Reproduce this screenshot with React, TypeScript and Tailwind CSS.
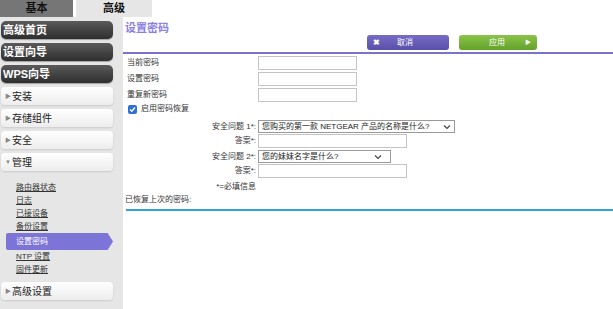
const font = { fontFamily: '"Liberation Sans", "Noto Sans CJK SC", sans-serif' };

const DarkBtn = ({ label }: { label: string }) => (
    <div className='ml-[1px] w-[112px] h-[18px] rounded-[5px] bg-gradient-to-b from-[#5a5a5a] to-[#2f2f2f] text-white text-[11px] font-bold leading-[18px] pl-[2px] shadow-[0_1px_1px_rgba(0,0,0,0.3)]'>
        {label}
    </div>
);

const WhiteBtn = ({ label, open }: { label: string; open?: boolean }) => (
    <div className='ml-[1px] w-[112px] h-[18px] rounded-[4px] bg-gradient-to-b from-white to-[#ededed] shadow-[0_1px_2px_rgba(0,0,0,0.12)] flex items-center text-[10px] text-[#222]'>
        <span className='w-[11px] pl-[4px] text-[6px] text-[#888]'>{open ? '▼' : '▶'}</span>
        <span>{label}</span>
    </div>
);

const SubItem = ({ label, active }: { label: string; active?: boolean }) => {
    if (active) {
        return (
            <div className='ml-[6px] w-[107px] h-[17px] bg-[#7d74d8] [clip-path:polygon(0_0,95%_0,100%_50%,95%_100%,0_100%)] text-white text-[8px] leading-[17px] pl-[10px] rounded-l-[2px]'>
                {label}
            </div>
        );
    }
    return <div className='h-[13px] pl-[16px] text-[8px] leading-[13px] text-[#333] underline'>{label}</div>;
};

const Chevron = () => (
    <svg width="8" height="6" viewBox="0 0 8 6"><path d="M1 1.5 L4 4.5 L7 1.5" fill="none" stroke="#444" strokeWidth="1.2" /></svg>
);

export default function App() {
    return (
        <div className='w-[613px] h-[309px] flex flex-col bg-white overflow-hidden' style={font}>
            {/* tabs */}
            <div className='flex h-[17px]'>
                <div className='w-[73px] bg-[#767676] text-[#111] text-[11px] font-bold flex items-center justify-center'>基本</div>
                <div className='ml-[3px] w-[76px] bg-[#e6e6e6] text-[#111] text-[11px] font-bold flex items-center justify-center'>高级</div>
            </div>
            <div className='flex flex-1'>
                {/* sidebar */}
                <div className='w-[123px] bg-[#e6e6e6] flex flex-col pt-[4px]'>
                    <div className='flex flex-col gap-[4px]'>
                        <DarkBtn label='高级首页' />
                        <DarkBtn label='设置向导' />
                        <DarkBtn label='WPS向导' />
                    </div>
                    <div className='flex flex-col gap-[4px] mt-[4px]'>
                        <WhiteBtn label='安装' />
                        <WhiteBtn label='存储组件' />
                        <WhiteBtn label='安全' />
                        <WhiteBtn label='管理' open />
                    </div>
                    <div className='flex flex-col mt-[10px]'>
                        <SubItem label='路由器状态' />
                        <SubItem label='日志' />
                        <SubItem label='已接设备' />
                        <SubItem label='备份设置' />
                        <SubItem label='设置密码' active />
                        <SubItem label='NTP 设置' />
                        <SubItem label='固件更新' />
                    </div>
                    <div className='mt-[6px]'>
                        <WhiteBtn label='高级设置' />
                    </div>
                </div>
                {/* content */}
                <div className='flex-1 flex flex-col'>
                    <div className='pl-[2px] pt-[5px] text-[11px] font-bold leading-[13px] text-[#8a80e0]'>设置密码</div>
                    <div className='flex pl-[244px] gap-[10px] h-[15px]'>
                        <div className='w-[82px] h-[15px] rounded-[3px] bg-gradient-to-b from-[#766bc6] to-[#5a4fa8] flex items-center text-white text-[8px]'>
                            <span className='pl-[6px] w-[30px] text-[8px] font-bold'>✖</span>
                            <span>取消</span>
                        </div>
                        <div className='w-[78px] h-[15px] rounded-[3px] bg-gradient-to-b from-[#8cc44a] to-[#62a12a] flex items-center text-white text-[8px]'>
                            <span className='pl-[30px] w-[66px]'>应用</span>
                            <span className='text-[6px]'>▶</span>
                        </div>
                    </div>
                    <div className='mt-[2px] h-[2px] bg-[#7b72cc]' />
                    <div className='flex flex-col gap-[2px] mt-[2px] text-[8px] text-[#333]'>
                        {['当前密码', '设置密码', '重复新密码'].map((l) => (
                            <div key={l} className='flex items-center h-[14px]'>
                                <div className='w-[135px] pl-[4px]'>{l}</div>
                                <div className='w-[99px] h-[14px] border border-[#c4c4c4] bg-white' />
                            </div>
                        ))}
                    </div>
                    <div className='flex items-center h-[12px] mt-[1px] pl-[5px] text-[8px] text-[#333]'>
                        <div className='w-[9px] h-[9px] rounded-[2px] bg-[#2f6fd8] flex items-center justify-center'>
                            <svg width="7" height="7" viewBox="0 0 7 7"><path d="M1 3.6 L2.8 5.3 L6 1.5" fill="none" stroke="white" strokeWidth="1.4" /></svg>
                        </div>
                        <span className='ml-[4px]'>启用密码恢复</span>
                    </div>
                    <div className='flex flex-col mt-[5px] text-[8px] text-[#333]'>
                        <div className='flex items-center h-[13px]'>
                            <div className='w-[135px] text-right pr-[2px]'>安全问题 1*:</div>
                            <div className='w-[197px] h-[13px] border border-[#9a9a9a] flex items-center justify-between pl-[3px] pr-[3px] text-[8px] text-[#222] whitespace-nowrap'>
                                <span>您购买的第一款 NETGEAR 产品的名称是什么?</span>
                                <Chevron />
                            </div>
                        </div>
                        <div className='flex items-center h-[14px] mt-[1px]'>
                            <div className='w-[135px] text-right pr-[2px]'>答案*:</div>
                            <div className='w-[149px] h-[14px] border border-[#c4c4c4]' />
                        </div>
                        <div className='flex items-center h-[13px] mt-[2px]'>
                            <div className='w-[135px] text-right pr-[2px]'>安全问题 2*:</div>
                            <div className='w-[133px] h-[13px] border border-[#9a9a9a] flex items-center justify-between pl-[3px] pr-[8px] text-[8px] text-[#222] whitespace-nowrap'>
                                <span>您的妹妹名字是什么?</span>
                                <Chevron />
                            </div>
                        </div>
                        <div className='flex items-center h-[14px] mt-[1px]'>
                            <div className='w-[135px] text-right pr-[2px]'>答案*:</div>
                            <div className='w-[149px] h-[14px] border border-[#c4c4c4]' />
                        </div>
                        <div className='w-[135px] text-right pr-[2px] mt-[3px] h-[12px] leading-[12px]'>*=必填信息</div>
                    </div>
                    <div className='pl-[2px] mt-[1px] text-[8px] text-[#333] h-[12px] leading-[12px]'>已恢复上次的密码:</div>
                    <div className='mt-[3px] ml-[3px] h-[2px] bg-[#33a3d3]' />
                </div>
            </div>
        </div>
    );
}
